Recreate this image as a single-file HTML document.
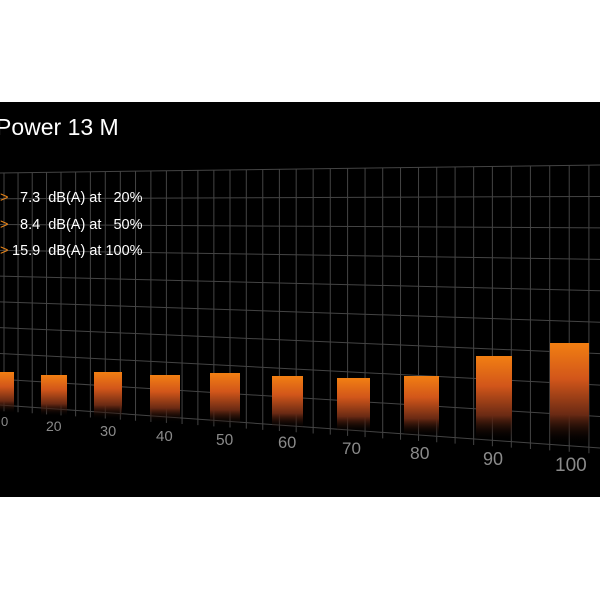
<!DOCTYPE html>
<html><head><style>
body{margin:0;background:#fff;width:600px;height:600px;overflow:hidden;font-family:"Liberation Sans",sans-serif}
svg{position:absolute;left:0;top:0}
</style></head><body>
<svg width="600" height="600" viewBox="0 0 600 600">
<defs>
<linearGradient id="g" x1="0" y1="0" x2="0" y2="1">
<stop offset="0" stop-color="#f27f12"/>
<stop offset="0.35" stop-color="#d2561a"/>
<stop offset="0.7" stop-color="#6a2a14"/>
<stop offset="1" stop-color="#000" stop-opacity="0"/>
</linearGradient>
</defs>
<rect x="0" y="102" width="600" height="395" fill="#000"/>
<g stroke="#444" stroke-width="1" id="grid"></g>
<g id="bars"></g>
<text x="-4" y="135" fill="#fff" font-size="23">Power 13 M</text>
<g font-size="14.5" fill="#fff">
<text x="0" y="202" fill="#e8851a">&gt;</text><text x="20" y="202">7.3&#160; dB(A) at&#160;&#160; 20%</text>
<text x="0" y="229" fill="#e8851a">&gt;</text><text x="20" y="229">8.4&#160; dB(A) at&#160;&#160; 50%</text>
<text x="0" y="255" fill="#e8851a">&gt;</text><text x="12" y="255">15.9&#160; dB(A) at 100%</text>
</g>
<g fill="#8a8a8a" id="labels"></g>
</svg>
<script>
var ns="http://www.w3.org/2000/svg";
function el(p,t,a,txt){var e=document.createElementNS(ns,t);for(var k in a)e.setAttribute(k,a[k]);if(txt)e.textContent=txt;document.getElementById(p).appendChild(e);}
for(var i=0;i<=9;i++){var f=i/9;var y0=173+(405-173)*f,y1=165+(448-165)*f;el("grid","line",{x1:0,y1:y0,x2:600,y2:y1});}
for(var x=4;x<600;x+=14+ x*0.01){var t=x/600;var yt=173-8*t,yb=405+43*t;el("grid","line",{x1:x,y1:yt,x2:x,y2:yb+6});}
var bars=[[-10,372,24],[41,375,26],[94,372,28],[150,375,30],[210,373,30],[272,376,31],[337,378,33],[404,376,35],[476,356,36],[550,343,39]];
bars.forEach(function(b){var t=b[0]/600;var bot=414+34*t;el("bars","rect",{x:b[0],y:b[1],width:b[2],height:bot-b[1],fill:"url(#g)"});});
var labs=[["0",1,426,13],["20",46,431,14],["30",100,436,14.5],["40",156,441,15],["50",216,445,15.5],["60",278,448,16.5],["70",342,454,17],["80",410,459,17.5],["90",483,465,18],["100",555,471,19]];
labs.forEach(function(l){el("labels","text",{x:l[1],y:l[2],"font-size":l[3]},l[0]);});
</script>
</body></html>
